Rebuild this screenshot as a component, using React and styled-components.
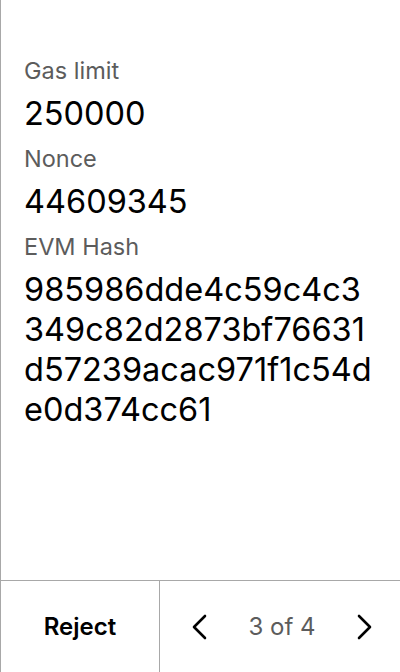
import React from "react";
import styled, { createGlobalStyle } from "styled-components";

const GlobalStyle = createGlobalStyle`
  html, body {
    margin: 0;
    padding: 0;
    background: #fff;
  }
  body {
    font-family: Inter, "Noto Sans", sans-serif;
  }
`;

const Screen = styled.div`
  display: flex;
  flex-direction: column;
  width: 400px;
  height: 672px;
  box-sizing: border-box;
  border-left: 1px solid #a8a8a8;
`;

const Details = styled.div`
  flex: 1;
  display: flex;
  flex-direction: column;
  padding: 46px 28px 0 23px;
`;

const Label = styled.div`
  font-size: 23.5px;
  line-height: 28px;
  color: #5c5c5c;
  margin-top: 11px;
  margin-bottom: 9px;
`;

const Value = styled.div`
  font-size: 32.5px;
  line-height: 40px;
  color: #000;
  word-break: break-all;
`;

const Footer = styled.div`
  display: flex;
  height: 92px;
  border-top: 1px solid #a8a8a8;
  box-sizing: border-box;
`;

const RejectButton = styled.button`
  width: 159px;
  border: none;
  border-right: 1px solid #a8a8a8;
  background: none;
  font-family: inherit;
  font-size: 24px;
  font-weight: 600;
  color: #000;
  padding: 0;
`;

const Pager = styled.div`
  flex: 1;
  display: flex;
  align-items: center;
  justify-content: space-between;
  padding: 0 26px 0 30px;
`;

const Arrow = styled.button`
  border: none;
  background: none;
  padding: 0;
  display: flex;
  align-items: center;
`;

const PageText = styled.span`
  font-size: 24px;
  color: #5c5c5c;
`;

const Chevron = ({ dir }) => (
  <svg width="18" height="26" viewBox="0 0 18 26" fill="none">
    <path
      d={dir === "left" ? "M15 2 L4 13 L15 24" : "M3 2 L14 13 L3 24"}
      stroke="#000"
      strokeWidth="2.6"
      strokeLinecap="round"
      strokeLinejoin="round"
    />
  </svg>
);

const fields = [
  { label: "Gas limit", value: "250000" },
  { label: "Nonce", value: "44609345" },
  { label: "EVM Hash", value: "985986dde4c59c4c3349c82d2873bf76631d57239acac971f1c54de0d374cc61" }
];

export default function App() {
  return (
    <>
      <GlobalStyle />
      <Screen>
        <Details>
          {fields.map(f => (
            <React.Fragment key={f.label}>
              <Label>{f.label}</Label>
              <Value>{f.value}</Value>
            </React.Fragment>
          ))}
        </Details>
        <Footer>
          <RejectButton>Reject</RejectButton>
          <Pager>
            <Arrow>
              <Chevron dir="left" />
            </Arrow>
            <PageText>3 of 4</PageText>
            <Arrow>
              <Chevron dir="right" />
            </Arrow>
          </Pager>
        </Footer>
      </Screen>
    </>
  );
}
